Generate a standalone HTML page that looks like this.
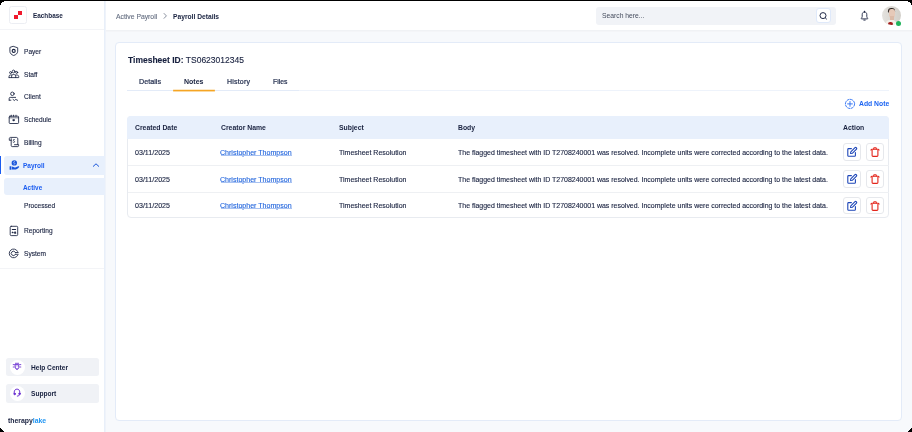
<!DOCTYPE html>
<html><head><meta charset="utf-8">
<style>
*{margin:0;padding:0;box-sizing:border-box}
html,body{width:912px;height:432px;overflow:hidden}
body{font-family:"Liberation Sans",sans-serif;color:#1c2646;position:relative;background:#f7f9fc}
.a{position:absolute}
svg.a{overflow:visible}
.t{position:absolute;white-space:nowrap;line-height:10px;will-change:transform}
.r{-webkit-text-stroke:0.12px currentColor}
</style></head><body>
<div class="a" style="left:0px;top:0px;width:912px;height:432px;background:#f7f9fc;"></div>
<div class="a" style="left:0px;top:0px;width:104px;height:432px;background:#ffffff;"></div>
<div class="a" style="left:104px;top:0px;width:1px;height:432px;background:#e8eff9;"></div>
<div class="a" style="left:105px;top:0px;width:1px;height:432px;background:#eff3fa;"></div>
<div class="a" style="left:106px;top:0px;width:806px;height:30px;background:#ffffff;"></div>
<div class="a" style="left:0px;top:29px;width:104px;height:1px;background:#f3f4f7;"></div>
<div class="a" style="left:106px;top:30px;width:806px;height:1px;background:#f0f2f5;"></div>
<div class="a" style="left:106px;top:31px;width:806px;height:1px;background:#f4f5f8;"></div>
<div class="a" style="left:0px;top:268px;width:104px;height:1px;background:#f3f4f7;"></div>
<div class="a" style="left:9px;top:6px;width:18px;height:18px;background:#fff;border:1px solid #eceef3;border-radius:2.5px;box-sizing:border-box"></div>
<div class="a" style="left:14px;top:15px;width:4px;height:4px;background:#f0192d;"></div>
<div class="a" style="left:18px;top:11px;width:4px;height:4px;background:#f0192d;"></div>
<div class="t" style="left:32.6px;top:10.78px;font-size:6.4px;color:#18213f;font-weight:bold;">Eachbase</div>
<div class="t r" style="left:23.5px;top:46.71px;font-size:6.6px;color:#18213f;">Payer</div>
<div class="t r" style="left:23.5px;top:69.71px;font-size:6.6px;color:#18213f;">Staff</div>
<div class="t r" style="left:23.5px;top:91.71px;font-size:6.6px;color:#18213f;">Client</div>
<div class="t r" style="left:23.5px;top:114.71px;font-size:6.6px;color:#18213f;">Schedule</div>
<div class="t r" style="left:23.5px;top:137.71px;font-size:6.6px;color:#18213f;">Billing</div>
<div class="a" style="left:0px;top:155.7px;width:1.3px;height:18.7px;background:#1a5cf0;"></div>
<div class="a" style="left:4.2px;top:156px;width:100.5px;height:18.7px;background:#e8f0fc;border-radius:3px 0 0 3px"></div>
<div class="t" style="left:23.3px;top:160.75px;font-size:6.5px;color:#1a5cf0;font-weight:bold;">Payroll</div>
<svg class="a" style="left:92px;top:162px;" width="8" height="6" viewBox="0 0 8 6"><path d="M1 4.6 L4 1.8 L7 4.6" fill="none" stroke="#1a56db" stroke-width="1"/></svg>
<div class="a" style="left:4.2px;top:178.4px;width:100.5px;height:16.8px;background:#e8f0fc;border-radius:3px 0 0 3px"></div>
<div class="t" style="left:23.3px;top:182.78px;font-size:6.4px;color:#1a5cf0;font-weight:bold;">Active</div>
<div class="t r" style="left:23.6px;top:200.71px;font-size:6.6px;color:#18213f;">Processed</div>
<div class="t r" style="left:23.5px;top:225.71px;font-size:6.6px;color:#18213f;">Reporting</div>
<div class="t r" style="left:23.5px;top:248.71px;font-size:6.6px;color:#18213f;">System</div>
<svg class="a" style="left:8px;top:45px;" width="12" height="12" viewBox="0 0 12 12"><g fill="none" stroke="#18213f" stroke-width="0.85" stroke-linecap="round" stroke-linejoin="round"><path d="M5.5 1.4 L9.7 2.8 V6.2 C9.7 8.4 8 9.7 5.7 10.5 C3.4 9.7 1.9 8.4 1.9 6.2 V2.8 Z"/><circle cx="5.7" cy="5.9" r="1.5" stroke-width="1.15"/></g></svg>
<svg class="a" style="left:8px;top:68px;" width="12" height="12" viewBox="0 0 12 12"><g fill="none" stroke="#18213f" stroke-width="0.85" stroke-linecap="round" stroke-linejoin="round"><circle cx="5.6" cy="3.5" r="1.4"/><circle cx="2.6" cy="4.6" r="1"/><circle cx="8.7" cy="4.4" r="1"/><path d="M3.6 9.6 V8.1 C3.6 7.1 4.4 6.5 5.6 6.5 C6.8 6.5 7.7 7.1 7.7 8.1 V9.6"/><path d="M1.1 9.6 V8.3 C1.1 7.5 1.6 7 2.5 7 H3.8 M7.5 7 H8.8 C9.8 7 10.7 7.5 10.7 8.3 V9.6 H1.1"/></g></svg>
<svg class="a" style="left:8px;top:91px;" width="12" height="12" viewBox="0 0 12 12"><g fill="none" stroke="#18213f" stroke-width="0.85" stroke-linecap="round" stroke-linejoin="round"><circle cx="4.4" cy="2.8" r="1.75"/><path d="M1.2 9.2 V7.3 C1.2 6.7 1.6 6.4 2.2 6.4 H7.6 M1.2 9.2 H2.9"/><path d="M5 8.4 L6.4 9.5 L7.7 8.4 L9.6 9.3"/></g></svg>
<svg class="a" style="left:8px;top:114px;" width="12" height="12" viewBox="0 0 12 12"><g fill="none" stroke="#18213f" stroke-width="0.85" stroke-linecap="round" stroke-linejoin="round"><rect x="1.2" y="2.2" width="9.4" height="7.3" rx="0.8"/><path d="M1.2 3.8 H10.6" stroke-dasharray="1.2 0.8" stroke-opacity="0.8"/><path d="M3.3 1.2 V2.2 M5.5 1.2 V2.2 M8 1.2 V2.2"/><path d="M4.9 6 C4.9 5.5 5.5 5.4 5.8 5.8 C6.1 5.4 6.7 5.5 6.7 6 C6.7 6.5 5.8 7.2 5.8 7.2 C5.8 7.2 4.9 6.5 4.9 6 Z" fill="#18213f" stroke-width="0.6"/></g></svg>
<svg class="a" style="left:8px;top:136px;" width="12" height="12" viewBox="0 0 12 12"><g fill="none" stroke="#18213f" stroke-width="0.85" stroke-linecap="round" stroke-linejoin="round"><path d="M3.2 4.3 H1.3 V2.6 C1.3 1.9 1.8 1.4 2.5 1.4 H8.4 C9.2 1.4 9.8 2 9.8 2.8 V8.6"/><path d="M3.2 2.6 V9.6 C3.2 10.2 3.6 10.6 4.2 10.6 H9.8 C10.3 10.6 10.6 10.2 10.6 9.7 V8.7 H6.5"/><path d="M6.6 3.6 C6.2 3.3 5.2 3.4 5.2 4.2 C5.2 5 6.6 4.8 6.6 5.7 C6.6 6.5 5.6 6.6 5.1 6.2" stroke-width="0.75"/></g></svg>
<svg class="a" style="left:8px;top:159px;" width="12" height="12" viewBox="0 0 12 12"><circle cx="6.3" cy="3.9" r="2.7" fill="#1a56db"/><path d="M6.9 2.7 C6.5 2.4 5.7 2.6 5.7 3.3 C5.7 4 6.9 3.8 6.9 4.6 C6.9 5.2 6.1 5.3 5.7 5" stroke="#fff" stroke-width="0.6" fill="none"/><rect x="1.6" y="7.2" width="1.8" height="3.6" rx="0.3" fill="#1a56db"/><path d="M3.9 7.6 C5 7.6 6 8.4 6.6 8.4 H7.4 L10.2 7.2 C10.9 6.9 11.5 7.6 11 8.2 C9.8 9.6 8.4 10.6 6.4 10.6 H3.9 Z" fill="#1a56db"/></svg>
<svg class="a" style="left:8px;top:225px;" width="12" height="12" viewBox="0 0 12 12"><g fill="none" stroke="#18213f" stroke-width="0.85" stroke-linecap="round" stroke-linejoin="round"><rect x="2.2" y="1.3" width="7.5" height="9.3" rx="1"/><path d="M4.3 4.5 H7.6" stroke-width="1.1"/><circle cx="4.5" cy="7.4" r="0.45" fill="#18213f"/><path d="M7.3 6.9 L8 8.2 H6.6 Z" fill="#18213f"/></g></svg>
<svg class="a" style="left:8px;top:248px;" width="12" height="12" viewBox="0 0 12 12"><g fill="none" stroke="#18213f" stroke-width="0.85" stroke-linecap="round" stroke-linejoin="round"><path d="M9.6 3.4 A4.4 4.4 0 1 0 9.6 7.4"/><path d="M7.3 4.2 A2.2 2.2 0 1 0 7.3 6.6"/><path d="M7.4 4.5 H10.2 M7.4 6.3 H10.2"/></g></svg>
<div class="a" style="left:6px;top:357.6px;width:93px;height:18.6px;background:#f0f2f6;border-radius:2.5px"></div>
<div class="a" style="left:9.5px;top:359.5px;width:15px;height:15px;background:#fff;border-radius:50%"></div>
<svg class="a" style="left:12px;top:361px;" width="10" height="10" viewBox="0 0 10 10"><g fill="none" stroke="#6a2fd1" stroke-width="0.85" stroke-linecap="round" stroke-linejoin="round"><path d="M3.4 2.3 H6.6"/><path d="M3.3 3.5 H6.7 V6.3 C6.7 7.5 5.9 8.6 5 8.6 C4.1 8.6 3.3 7.5 3.3 6.3 Z"/><path d="M3.6 4.8 H6.4" stroke-opacity="0.5"/><path d="M4.3 7.4 C4.5 7.9 5.5 7.9 5.7 7.4" stroke-width="0.7"/><path d="M1.2 3.6 H2.4 M7.6 3.6 H8.8 M1.2 6 H2.4 M7.6 6 H8.8"/></g></svg>
<div class="t" style="left:30.7px;top:362.71px;font-size:6.6px;color:#18213f;font-weight:bold;">Help Center</div>
<div class="a" style="left:6px;top:384.1px;width:93px;height:18.6px;background:#f0f2f6;border-radius:2.5px"></div>
<div class="a" style="left:9.5px;top:386px;width:15px;height:15px;background:#fff;border-radius:50%"></div>
<svg class="a" style="left:12px;top:387px;" width="10" height="10" viewBox="0 0 10 10"><g fill="none" stroke="#6a2fd1" stroke-width="0.95" stroke-linecap="round"><path d="M2.2 6.2 V5.2 C2.2 3.3 3.4 2.1 5 2.1 C6.6 2.1 7.8 3.3 7.8 5.2 V6.2"/><circle cx="2.6" cy="6.9" r="0.8" fill="#6a2fd1"/><circle cx="7.5" cy="6.8" r="0.8" fill="#6a2fd1"/><path d="M7.6 7.6 C7.4 8.6 6.6 9.1 5.3 9.1"/></g></svg>
<div class="t" style="left:30.7px;top:388.71px;font-size:6.6px;color:#18213f;font-weight:bold;">Support</div>
<div class="t" style="left:7.5px;top:415.61px;font-size:6.9px;color:#18213f;font-weight:bold;letter-spacing:-0.02px;">therapy<span style="color:#2196f3">lake</span></div>
<div class="t r" style="left:116.1px;top:11.64px;font-size:6.8px;color:#666f82;">Active Payroll</div>
<svg class="a" style="left:162px;top:12px;" width="6" height="8" viewBox="0 0 6 8"><path d="M1.8 1.2 L4.4 3.9 L1.8 6.6" fill="none" stroke="#6b7385" stroke-width="0.8"/></svg>
<div class="t" style="left:172.9px;top:11.68px;font-size:6.7px;color:#18213f;font-weight:bold;">Payroll Details</div>
<div class="a" style="left:596px;top:6.6px;width:240px;height:18.8px;background:#f1f3f7;border-radius:3px"></div>
<div class="t r" style="left:601.6px;top:11.16px;font-size:6.75px;color:#464d5e;-webkit-text-stroke:0;">Search here...</div>
<div class="a" style="left:816.3px;top:8.3px;width:14.8px;height:15.1px;background:#fff;border:1px solid #dfe9fa;border-radius:3px;box-sizing:border-box"></div>
<svg class="a" style="left:817px;top:10px;" width="13" height="12" viewBox="0 0 13 12"><g fill="none" stroke="#18213f" stroke-width="0.95"><circle cx="6" cy="5.6" r="3"/><path d="M8.2 7.8 L9.8 9.3"/></g></svg>
<svg class="a" style="left:859px;top:10px;" width="11" height="12" viewBox="0 0 11 12"><g fill="none" stroke="#18213f" stroke-width="0.9" stroke-linejoin="round" stroke-linecap="round"><path d="M5.5 1.9 C3.9 1.9 3.2 3.1 3.2 4.7 V6.6 C3.2 7.3 2.7 7.7 2.3 8.2 C2.1 8.5 2.3 8.9 2.7 8.9 H8.3 C8.7 8.9 8.9 8.5 8.7 8.2 C8.3 7.7 7.8 7.3 7.8 6.6 V4.7 C7.8 3.1 7.1 1.9 5.5 1.9 Z"/><path d="M5.5 1.2 V1.9 M4.8 10.1 H6.2"/></g></svg>
<div class="a" style="left:881.7px;top:6.3px;width:19px;height:19px;border-radius:50%;overflow:hidden;background:linear-gradient(90deg,#e4e2de,#d2cfc9)">
<div class="a" style="left:6.2px;top:1.3px;width:7.6px;height:5px;border-radius:4px 4px 2px 2px;background:#2b2320"></div>
<div class="a" style="left:7px;top:3.2px;width:6.4px;height:8.8px;border-radius:2.5px 3px 3.5px 3.5px;background:#e6c9b8"></div>
<div class="a" style="left:8.5px;top:10px;width:3.5px;height:4px;background:#dcbba8"></div>
<div class="a" style="left:3.5px;top:13.5px;width:12px;height:8px;border-radius:5px 5px 0 0;background:#f3efe9"></div>
<div class="a" style="left:6.3px;top:15.4px;width:4.8px;height:4.4px;border-radius:50%;background:#a31b1b"></div>
</div>
<div class="a" style="left:895.8px;top:20.5px;width:5.4px;height:5.4px;background:#1fb35a;border-radius:50%"></div>
<div class="a" style="left:115.2px;top:42.2px;width:786.4px;height:379.2px;background:#fff;border:1px solid #e3ebf8;border-radius:4px;box-sizing:border-box"></div>
<div class="t r" style="left:127.7px;top:55.05px;font-size:8.5px;color:#18213f;"><b>Timesheet ID:</b> TS0623012345</div>
<div class="a" style="left:127px;top:90px;width:762px;height:1px;background:#eef3fb;"></div>
<div class="a" style="left:127px;top:90px;width:172px;height:1px;background:#e3ebf8;"></div>
<div class="a" style="left:172.5px;top:90px;width:42.5px;height:1px;background:#f5a524;border-radius:1px"></div>
<div class="a" style="left:173px;top:91px;width:41.5px;height:1px;background:#fbd9a0;border-radius:1px"></div>
<div class="a" style="left:173px;top:89px;width:41.5px;height:1px;background:#fde9c8;border-radius:1px"></div>
<div class="t r" style="left:138.9px;top:76.51px;font-size:7.2px;color:#263150;-webkit-text-stroke:0.22px #263150;">Details</div>
<div class="t" style="left:183.8px;top:76.57px;font-size:7.0px;color:#18213f;font-weight:bold;">Notes</div>
<div class="t r" style="left:226.8px;top:76.57px;font-size:7.0px;color:#263150;letter-spacing:0.2px;-webkit-text-stroke:0.22px #263150;">History</div>
<div class="t r" style="left:272.7px;top:76.64px;font-size:6.8px;color:#263150;-webkit-text-stroke:0.22px #263150;">Files</div>
<svg class="a" style="left:844px;top:98px;" width="12" height="12" viewBox="0 0 12 12"><g fill="none" stroke="#1c64f2" stroke-width="0.85" stroke-linecap="round"><circle cx="6" cy="5.9" r="4.6" stroke-dasharray="2.2 1.4"/><path d="M6 3.5 V8.3 M3.6 5.9 H8.4"/></g></svg>
<div class="t" style="left:858.8px;top:98.64px;font-size:6.8px;color:#1c64f2;font-weight:bold;">Add Note</div>
<div class="a" style="left:127.2px;top:115.9px;width:762.2px;height:102.6px;background:#fff;border:1px solid #e8ebf0;border-radius:4px;box-sizing:border-box"></div>
<div class="a" style="left:127.2px;top:115.9px;width:762.2px;height:22.9px;background:#e8f0fc;border-radius:4px 4px 0 0"></div>
<div class="a" style="left:128px;top:165px;width:761px;height:1px;background:#eef0f3;"></div>
<div class="a" style="left:128px;top:191.5px;width:761px;height:1px;background:#eef0f3;"></div>
<div class="t" style="left:134.6px;top:122.63px;font-size:6.85px;color:#18213f;font-weight:bold;">Created Date</div>
<div class="t" style="left:220.6px;top:122.63px;font-size:6.85px;color:#18213f;font-weight:bold;">Creator Name</div>
<div class="t" style="left:338.8px;top:122.63px;font-size:6.85px;color:#18213f;font-weight:bold;">Subject</div>
<div class="t" style="left:457.8px;top:122.63px;font-size:6.85px;color:#18213f;font-weight:bold;">Body</div>
<div class="t" style="left:843.2px;top:122.63px;font-size:6.85px;color:#18213f;font-weight:bold;">Action</div>
<div class="t r" style="left:134.6px;top:147.54px;font-size:7.1px;color:#18213f;">03/11/2025</div>
<div class="t r" style="left:220.3px;top:147.56px;font-size:7.05px;color:#1f63dc;">Christopher Thompson</div>
<div class="a" style="left:220.5px;top:155px;width:71.5px;height:1px;background:#a8c2f2;"></div>
<div class="t r" style="left:338.8px;top:147.57px;font-size:7.0px;color:#18213f;">Timesheet Resolution</div>
<div class="t r" style="left:457.8px;top:147.58px;font-size:6.97px;color:#18213f;">The flagged timesheet with ID T2708240001 was resolved. Incomplete units were corrected according to the latest data.</div>
<div class="a" style="left:843.3px;top:143.3px;width:17.5px;height:17.5px;background:#fff;border:1px solid #e6e8ec;border-radius:3px;box-sizing:border-box"></div>
<svg class="a" style="left:846px;top:146.3px;" width="12" height="12" viewBox="0 0 12 12"><g fill="none" stroke="#1d46b8" stroke-width="1.1" stroke-linejoin="round" stroke-linecap="round"><path d="M5.4 2.6 H2.6 C2.1 2.6 1.8 2.9 1.8 3.4 V9.4 C1.8 9.9 2.1 10.2 2.6 10.2 H8.6 C9.1 10.2 9.4 9.9 9.4 9.4 V6.6"/><path d="M4.5 7.5 L4.8 5.8 L9 1.6 C9.3 1.3 9.8 1.3 10.1 1.6 L10.5 2 C10.8 2.3 10.8 2.8 10.5 3.1 L6.3 7.3 Z"/></g></svg>
<div class="a" style="left:866.3px;top:143.3px;width:17.5px;height:17.5px;background:#fff;border:1px solid #e6e8ec;border-radius:3px;box-sizing:border-box"></div>
<svg class="a" style="left:869px;top:146.3px;" width="12" height="12" viewBox="0 0 12 12"><g fill="none" stroke="#e3261c" stroke-width="1.1" stroke-linejoin="round" stroke-linecap="round"><path d="M3.1 4.2 V9.5 C3.1 10 3.5 10.4 4 10.4 H8 C8.5 10.4 8.9 10 8.9 9.5 V4.2"/><path d="M2 4.2 C2.1 3.6 2.5 3.2 3 3.2 H9 C9.5 3.2 9.9 3.6 10 4.2"/><path d="M4.7 3.1 V2.4 C4.7 2 5 1.7 5.4 1.7 H6.6 C7 1.7 7.3 2 7.3 2.4 V3.1"/></g></svg>
<div class="t r" style="left:134.6px;top:174.54px;font-size:7.1px;color:#18213f;">03/11/2025</div>
<div class="t r" style="left:220.3px;top:174.56px;font-size:7.05px;color:#1f63dc;">Christopher Thompson</div>
<div class="a" style="left:220.5px;top:182px;width:71.5px;height:1px;background:#a8c2f2;"></div>
<div class="t r" style="left:338.8px;top:174.57px;font-size:7.0px;color:#18213f;">Timesheet Resolution</div>
<div class="t r" style="left:457.8px;top:174.58px;font-size:6.97px;color:#18213f;">The flagged timesheet with ID T2708240001 was resolved. Incomplete units were corrected according to the latest data.</div>
<div class="a" style="left:843.3px;top:170.2px;width:17.5px;height:17.5px;background:#fff;border:1px solid #e6e8ec;border-radius:3px;box-sizing:border-box"></div>
<svg class="a" style="left:846px;top:173.2px;" width="12" height="12" viewBox="0 0 12 12"><g fill="none" stroke="#1d46b8" stroke-width="1.1" stroke-linejoin="round" stroke-linecap="round"><path d="M5.4 2.6 H2.6 C2.1 2.6 1.8 2.9 1.8 3.4 V9.4 C1.8 9.9 2.1 10.2 2.6 10.2 H8.6 C9.1 10.2 9.4 9.9 9.4 9.4 V6.6"/><path d="M4.5 7.5 L4.8 5.8 L9 1.6 C9.3 1.3 9.8 1.3 10.1 1.6 L10.5 2 C10.8 2.3 10.8 2.8 10.5 3.1 L6.3 7.3 Z"/></g></svg>
<div class="a" style="left:866.3px;top:170.2px;width:17.5px;height:17.5px;background:#fff;border:1px solid #e6e8ec;border-radius:3px;box-sizing:border-box"></div>
<svg class="a" style="left:869px;top:173.2px;" width="12" height="12" viewBox="0 0 12 12"><g fill="none" stroke="#e3261c" stroke-width="1.1" stroke-linejoin="round" stroke-linecap="round"><path d="M3.1 4.2 V9.5 C3.1 10 3.5 10.4 4 10.4 H8 C8.5 10.4 8.9 10 8.9 9.5 V4.2"/><path d="M2 4.2 C2.1 3.6 2.5 3.2 3 3.2 H9 C9.5 3.2 9.9 3.6 10 4.2"/><path d="M4.7 3.1 V2.4 C4.7 2 5 1.7 5.4 1.7 H6.6 C7 1.7 7.3 2 7.3 2.4 V3.1"/></g></svg>
<div class="t r" style="left:134.6px;top:200.54px;font-size:7.1px;color:#18213f;">03/11/2025</div>
<div class="t r" style="left:220.3px;top:200.56px;font-size:7.05px;color:#1f63dc;">Christopher Thompson</div>
<div class="a" style="left:220.5px;top:208px;width:71.5px;height:1px;background:#a8c2f2;"></div>
<div class="t r" style="left:338.8px;top:200.57px;font-size:7.0px;color:#18213f;">Timesheet Resolution</div>
<div class="t r" style="left:457.8px;top:200.58px;font-size:6.97px;color:#18213f;">The flagged timesheet with ID T2708240001 was resolved. Incomplete units were corrected according to the latest data.</div>
<div class="a" style="left:843.3px;top:196.8px;width:17.5px;height:17.5px;background:#fff;border:1px solid #e6e8ec;border-radius:3px;box-sizing:border-box"></div>
<svg class="a" style="left:846px;top:199.8px;" width="12" height="12" viewBox="0 0 12 12"><g fill="none" stroke="#1d46b8" stroke-width="1.1" stroke-linejoin="round" stroke-linecap="round"><path d="M5.4 2.6 H2.6 C2.1 2.6 1.8 2.9 1.8 3.4 V9.4 C1.8 9.9 2.1 10.2 2.6 10.2 H8.6 C9.1 10.2 9.4 9.9 9.4 9.4 V6.6"/><path d="M4.5 7.5 L4.8 5.8 L9 1.6 C9.3 1.3 9.8 1.3 10.1 1.6 L10.5 2 C10.8 2.3 10.8 2.8 10.5 3.1 L6.3 7.3 Z"/></g></svg>
<div class="a" style="left:866.3px;top:196.8px;width:17.5px;height:17.5px;background:#fff;border:1px solid #e6e8ec;border-radius:3px;box-sizing:border-box"></div>
<svg class="a" style="left:869px;top:199.8px;" width="12" height="12" viewBox="0 0 12 12"><g fill="none" stroke="#e3261c" stroke-width="1.1" stroke-linejoin="round" stroke-linecap="round"><path d="M3.1 4.2 V9.5 C3.1 10 3.5 10.4 4 10.4 H8 C8.5 10.4 8.9 10 8.9 9.5 V4.2"/><path d="M2 4.2 C2.1 3.6 2.5 3.2 3 3.2 H9 C9.5 3.2 9.9 3.6 10 4.2"/><path d="M4.7 3.1 V2.4 C4.7 2 5 1.7 5.4 1.7 H6.6 C7 1.7 7.3 2 7.3 2.4 V3.1"/></g></svg>
<div class="a" style="left:0px;top:0px;width:912px;height:1px;background:#000;"></div>
<div class="a" style="left:0px;top:1px;width:4px;height:1px;background:#000;"></div>
<div class="a" style="left:908px;top:1px;width:4px;height:1px;background:#000;"></div>
<div class="a" style="left:0px;top:2px;width:2px;height:1px;background:#000;"></div>
<div class="a" style="left:910px;top:2px;width:2px;height:1px;background:#000;"></div>
<div class="a" style="left:0px;top:3px;width:1px;height:1px;background:#000;"></div>
<div class="a" style="left:911px;top:3px;width:1px;height:1px;background:#000;"></div>
<div class="a" style="left:0px;top:4px;width:1px;height:1px;background:#000;"></div>
<div class="a" style="left:911px;top:4px;width:1px;height:1px;background:#000;"></div>
<div class="a" style="left:0px;top:428px;width:1px;height:1px;background:#000;"></div>
<div class="a" style="left:911px;top:428px;width:1px;height:1px;background:#000;"></div>
<div class="a" style="left:0px;top:429px;width:2px;height:1px;background:#000;"></div>
<div class="a" style="left:910px;top:429px;width:2px;height:1px;background:#000;"></div>
<div class="a" style="left:0px;top:430px;width:3px;height:1px;background:#000;"></div>
<div class="a" style="left:909px;top:430px;width:3px;height:1px;background:#000;"></div>
<div class="a" style="left:0px;top:431px;width:4px;height:1px;background:#000;"></div>
<div class="a" style="left:908px;top:431px;width:4px;height:1px;background:#000;"></div>
</body></html>
